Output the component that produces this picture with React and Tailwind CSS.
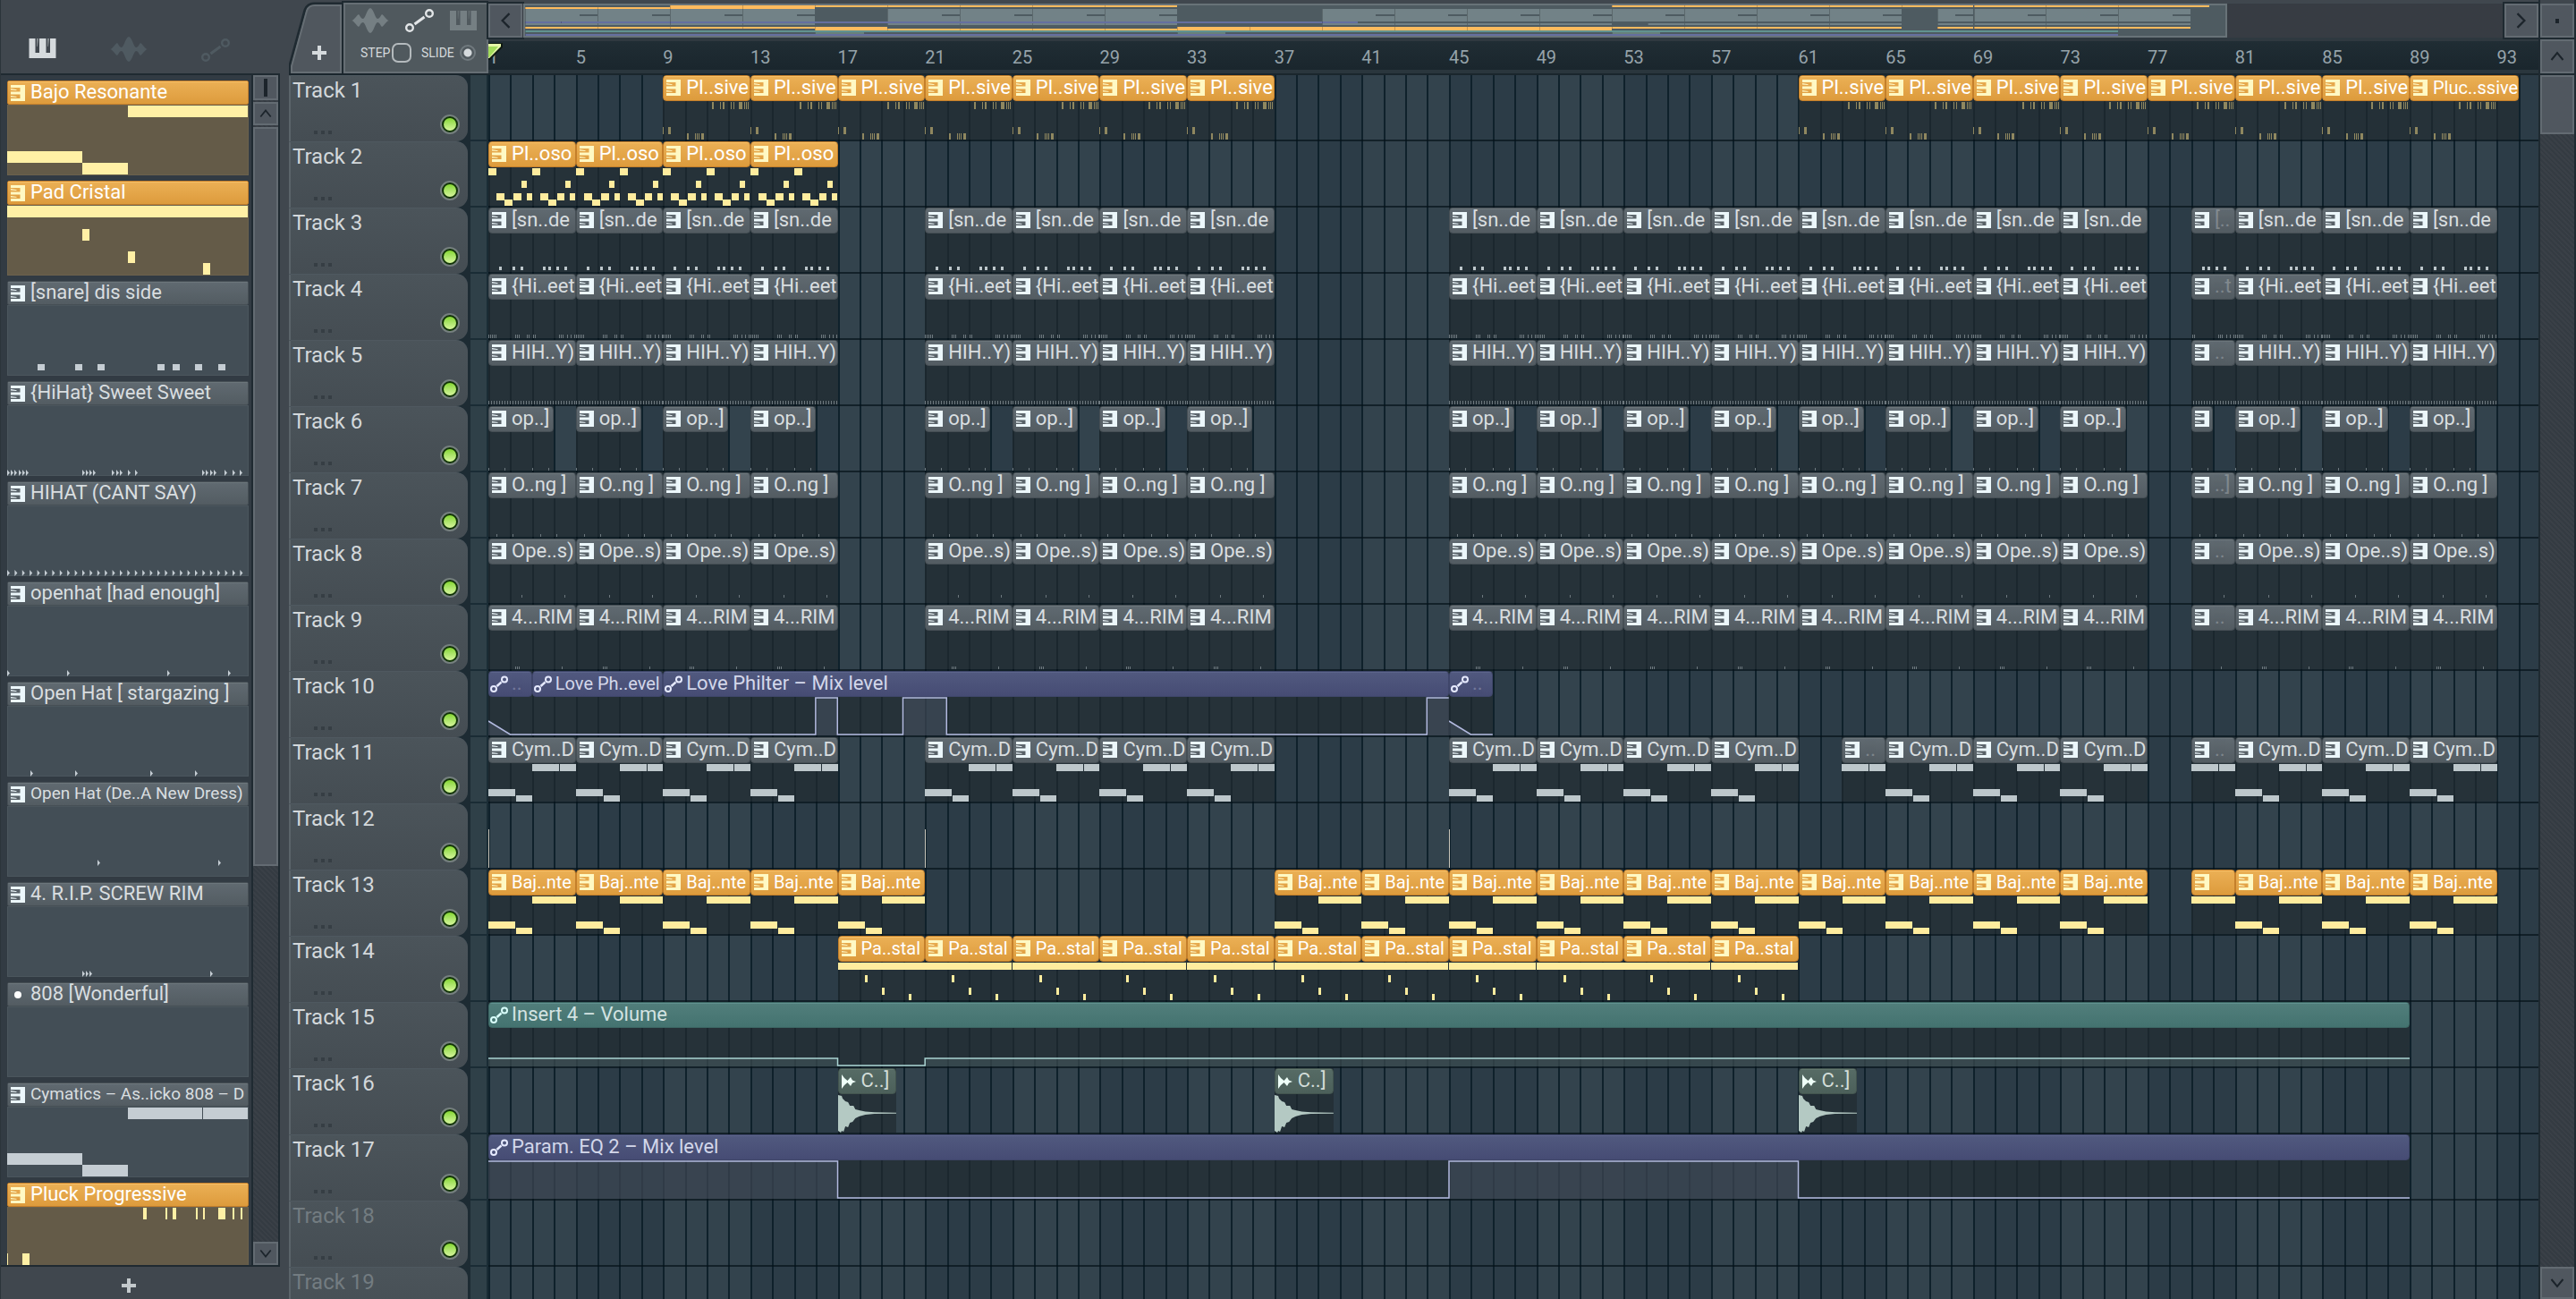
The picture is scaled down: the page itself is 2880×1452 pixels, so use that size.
import React from "react";

const BARS = 93.9;
const BAR_W = 24.41;
const pct = (n) => `${(n / BARS) * 100}%`;

/* ---------- icons ---------- */

function PianoIcon({ className }) {
  return (
    <svg viewBox="0 0 30 22" className={className} fill="currentColor" aria-hidden="true">
      <path d="M0 0H7V16H11.5V0H19V16H23.5V0H30V22H0Z" />
      <path d="M8.6 0H10.4L9.4 9H8.8ZM20.6 0H22.4L21.4 9H20.8Z" opacity="0.55" />
    </svg>
  );
}

function PatternIcon({ className }) {
  return (
    <svg viewBox="0 0 16 18" className={className} fill="currentColor" aria-hidden="true">
      <path d="M0 0H16V18H0V15H10.5V10.6H0V7.4H10.5V3H0Z" />
      <path d="M0 4L7 5.2L6 6L0 5.4ZM0 12L7 13L6 13.8L0 13.6Z" />
    </svg>
  );
}

function WaveIcon({ className }) {
  return (
    <svg viewBox="0 0 42 28" className={className} fill="currentColor" aria-hidden="true">
      <path d="M0 14C3 13.5 5 9 8 7C10 9 10.5 12 13 12C16 11 17 1 21 0C25 1 26 11 29 12C31.5 12 32 9 34 7C37 9 39 13.5 42 14C39 14.5 37 19 34 21C32 19 31.5 16 29 16C26 17 25 27 21 28C17 27 16 17 13 16C10.5 16 10 19 8 21C5 19 3 14.5 0 14Z" />
    </svg>
  );
}

function LinkIcon({ className }) {
  return (
    <svg viewBox="0 0 32 26" className={className} fill="none" stroke="currentColor" aria-hidden="true">
      <circle cx="5" cy="21" r="3.8" strokeWidth="2.4" />
      <circle cx="27" cy="5" r="3.8" strokeWidth="2.4" />
      <path d="M10.5 17L21.5 9" strokeWidth="3" />
    </svg>
  );
}

function SmallLinkIcon({ className }) {
  return (
    <svg viewBox="0 0 20 19" className={className} fill="none" stroke="currentColor" aria-hidden="true">
      <circle cx="4" cy="15" r="3" strokeWidth="2" />
      <circle cx="16" cy="4.5" r="3" strokeWidth="2" />
      <path d="M7.5 12L12.5 7.5" strokeWidth="2.4" />
    </svg>
  );
}

function SampleIcon({ className }) {
  return (
    <svg viewBox="0 0 16 16" className={className} fill="currentColor" aria-hidden="true">
      <path d="M0 0L3 4L6.5 7L10 3L12 6.5L16 8L12 9.5L10 13L6.5 9L3 12L0 16Z" />
    </svg>
  );
}

function PlusIcon({ className }) {
  return (
    <svg viewBox="0 0 16 16" className={className} fill="currentColor" aria-hidden="true">
      <path d="M6 0H10V6H16V10H10V16H6V10H0V6H6Z" />
    </svg>
  );
}

function Chevron({ d, className }) {
  return (
    <svg viewBox="0 0 16 16" className={className} fill="none" stroke="currentColor" strokeWidth="2" aria-hidden="true">
      <path d={d} />
    </svg>
  );
}
const UP = "M1.5 12L8 4L14.5 12";
const DOWN = "M1.5 4L8 12L14.5 4";
const LEFT = "M12 1L5 8L12 15";
const RIGHT = "M4 1L11 8L4 15";

/* ---------- note patterns: [x, y, w, h] ---------- */

const ticks = (xs, y, h = 3) => xs.map((x) => [x, y, 1, h]);
const range = (from, to, step) => {
  const out = [];
  for (let n = from; n < to; n += step) out.push(n);
  return out;
};

const PATTERNS = {
  pluck: [
    [55, 1, 2, 8], [64, 1, 1, 8], [67, 1, 2, 8], [76, 1, 1, 8], [79, 1, 1, 8], [85, 1, 4, 8], [91, 1, 1, 8], [93, 1, 1, 8], [95, 1, 1, 8],
    [0, 29, 1, 8], [6, 29, 3, 8], [27, 36, 2, 7], [36, 36, 1, 7], [38, 36, 1, 7], [40, 36, 1, 7], [43, 36, 3, 7],
  ],
  arp: [
    [0, 1, 9, 8], [49, 1, 9, 8], [37, 15, 6, 8], [86, 15, 6, 8],
    [9, 29, 9, 8], [28, 29, 9, 8], [43, 29, 6, 8], [58, 29, 9, 8], [77, 29, 8, 8], [91, 29, 6, 8], [18, 36, 9, 7], [67, 36, 9, 7],
  ],
  snare: [[12, 37, 3, 4], [27, 37, 3, 4], [36, 37, 3, 4], [61, 37, 3, 4], [67, 37, 3, 4], [76, 37, 3, 4], [85, 37, 3, 4]],
  hihat: ticks([0, 2, 4, 6, 8, 30, 32, 34, 43, 45, 50, 52, 79, 81, 83, 88, 92, 96], 39, 4),
  cantsay: ticks(range(0, 97, 3), 39, 4),
  openhat: ticks([0, 18, 49, 67], 40),
  stargaze: ticks([9, 27, 58, 76], 40),
  newdress: ticks([37, 85], 34),
  rim: ticks([30, 32, 34, 82], 40),
  sub: [[49, 1, 30, 8], [80, 1, 18, 8], [0, 29, 30, 8], [31, 36, 18, 7]],
  bajo: [[49, 1, 49, 8], [0, 29, 30, 8], [31, 36, 18, 7]],
  pad: [[0, 1, 97, 8], [30, 15, 3, 8], [49, 29, 3, 8], [79, 36, 3, 7]],
};

const run = (from, to) => range(from, to, 4);
const MAIN = [...run(1, 17), ...run(21, 37), ...run(45, 77)];
const TAIL = [81, 85, 89];

function repeat(label, starts, extra = {}) {
  return starts.map((at) => ({ at, len: 4, label, ...extra }));
}
function drums(label, half) {
  return [...repeat(label, MAIN), { at: 79, len: 2, label: half, dim: true, offset: 2 }, ...repeat(label, TAIL)];
}

const TRACKS = [
  { name: "Track 1", tone: "orange", pattern: "pluck", faint: true, clips: [...repeat("Pl..sive", [...run(9, 37), ...run(61, 89)]), { at: 89, len: 5, label: "Pluc..ssive", small: true }] },
  { name: "Track 2", tone: "orange", pattern: "arp", clips: repeat("Pl..oso", run(1, 17)) },
  { name: "Track 3", tone: "gray", pattern: "snare", clips: drums("[sn..de", "[..") },
  { name: "Track 4", tone: "gray", pattern: "hihat", faint: true, clips: drums("{Hi..eet", "..t") },
  { name: "Track 5", tone: "gray", pattern: "cantsay", faint: true, clips: drums("HIH..Y)", "..") },
  {
    name: "Track 6", tone: "gray", pattern: "openhat", faint: true,
    clips: [...repeat("op..]", MAIN, { len: 3 }), { at: 79, len: 1, label: "", offset: 2 }, ...repeat("op..]", TAIL, { len: 3 })],
  },
  { name: "Track 7", tone: "gray", pattern: "stargaze", faint: true, clips: drums("O..ng ]", "..]") },
  { name: "Track 8", tone: "gray", pattern: "newdress", faint: true, clips: drums("Ope..s)", "..") },
  { name: "Track 9", tone: "gray", pattern: "rim", faint: true, clips: drums("4...RIM", "..") },
  {
    name: "Track 10", tone: "violet",
    clips: [
      { at: 1, len: 2, label: "..", dim: true, curve: [[0, 27], [1, 42], [2, 42]] },
      { at: 3, len: 6, label: "Love Ph..evel", small: true, curve: [[0, 42], [6, 42]] },
      { at: 9, len: 36, label: "Love Philter – Mix level", curve: [[0, 42], [7, 42], [7, 1], [8, 1], [8, 42], [11, 42], [11, 1], [13, 1], [13, 42], [35, 42], [35, 1], [36, 1]] },
      { at: 45, len: 2, label: "..", dim: true, curve: [[0, 27], [1, 42], [2, 42]] },
    ],
  },
  {
    name: "Track 11", tone: "gray", pattern: "sub",
    clips: [
      ...repeat("Cym..D", [...run(1, 17), ...run(21, 37), ...run(45, 61)]),
      { at: 63, len: 2, label: "..", dim: true, offset: 2 },
      ...repeat("Cym..D", run(65, 77)),
      { at: 79, len: 2, label: "..", dim: true, offset: 2 },
      ...repeat("Cym..D", TAIL),
    ],
  },
  { name: "Track 12", tone: "gray", clips: [], marks: [1, 21, 45] },
  {
    name: "Track 13", tone: "orange", pattern: "bajo",
    clips: [...repeat("Baj..nte", [...run(1, 21), ...run(37, 77)], { small: true }), { at: 79, len: 2, label: "", offset: 2 }, ...repeat("Baj..nte", TAIL, { small: true })],
  },
  { name: "Track 14", tone: "orange", pattern: "pad", clips: repeat("Pa..stal", run(17, 61), { small: true }) },
  { name: "Track 15", tone: "teal", clips: [{ at: 1, len: 88, label: "Insert 4 – Volume", curve: [[0, 34], [16, 34], [16, 42], [20, 42], [20, 34], [88, 34]] }] },
  { name: "Track 16", tone: "sage", clips: repeat("C..]", [17, 37, 61], { len: 2.7 }) },
  { name: "Track 17", tone: "violet", clips: [{ at: 1, len: 88, label: "Param. EQ 2 – Mix level", curve: [[0, 1], [16, 1], [16, 42], [44, 42], [44, 1], [60, 1], [60, 42], [88, 42]] }] },
  { name: "Track 18", tone: "gray", clips: [], off: true },
  { name: "Track 19", tone: "gray", clips: [], off: true },
];

const TONES = {
  orange: { head: "bg-linear-to-b from-[#ebb055] to-[#dd9b3c] border-[#c47f2a] text-white", icon: "text-[#fff9c4]", inner: "border-t-[#f5bf67]", notes: "text-[#ffec9e]", faint: "text-[#8f875f]", map: "bg-[#ffbb5e]" },
  gray: { head: "bg-linear-to-b from-[#606a71] to-[#535c62] border-[#464f55] text-[#d9dee0]", icon: "text-[#ecf7fb]", inner: "border-t-[#6c767b]", notes: "text-[#bdc7cb]", faint: "text-[#6d787e]", map: "bg-[#728287]" },
  violet: { head: "bg-linear-to-b from-[#51597f] to-[#464c74] border-[#3f466a] text-[#d3d7ea]", icon: "text-[#e6eaff]", inner: "border-t-[#5d658c]", notes: "text-[#b3bae0]", faint: "text-[#b3bae0]", map: "bg-[#656f9f]" },
  teal: { head: "bg-linear-to-b from-[#517e7b] to-[#447370] border-[#3c6663] text-[#d3e3e2]", icon: "text-[#d9fffb]", inner: "border-t-[#619290]", notes: "text-[#a9d3d2]", faint: "text-[#a9d3d2]", map: "bg-[#619290]" },
  sage: { head: "bg-linear-to-b from-[#566b65] to-[#4c605a] border-[#43554f] text-[#d3ddd9]", icon: "text-[#eefff8]", inner: "border-t-[#64786f]", notes: "text-[#b4c9c3]", faint: "text-[#b4c9c3]", map: "bg-[#67817b]" },
};

/* ---------- clips ---------- */

function Notes({ clip, notes }) {
  return (
    <svg viewBox={`${(clip.offset || 0) * BAR_W} 0 ${clip.len * BAR_W} 43`} preserveAspectRatio="none" className="block h-full w-full" fill="currentColor" shapeRendering="crispEdges">
      {notes.map(([x, y, w, h], i) => (
        <rect key={i} x={x} y={y} width={w} height={h} />
      ))}
    </svg>
  );
}

function Curve({ clip }) {
  const pts = clip.curve.map(([x, y]) => `${x * BAR_W},${y}`).join(" ");
  return (
    <svg viewBox={`0 0 ${clip.len * BAR_W} 43`} preserveAspectRatio="none" className="block h-full w-full">
      <polygon points={`0,43 ${pts} ${clip.len * BAR_W},43`} fill="currentColor" opacity="0.14" />
      <polyline points={pts} fill="none" stroke="currentColor" strokeWidth="1.5" vectorEffect="non-scaling-stroke" />
    </svg>
  );
}

function Sample() {
  return (
    <svg viewBox="0 0 65 43" preserveAspectRatio="none" className="block h-full w-full" fill="currentColor">
      <path d="M0 1L4 2L5 5L8 8L11 9L13 13L17 13L19 17L23 18L30 19.5L40 20.3L65 20.7V21.7L40 22L30 23L23 25L19 27L16 31L13 32L11 37L8 36L6 42L4 41L3 43L0 41Z" />
    </svg>
  );
}

function Clip({ clip, track }) {
  const tone = TONES[track.tone];
  const auto = Boolean(clip.curve);
  const sample = track.tone === "sage";
  return (
    <div className="absolute inset-y-0 overflow-hidden bg-[#212b31]/70" style={{ left: pct(clip.at - 1), width: pct(clip.len) }}>
      <div className={`flex h-[29px] items-start overflow-hidden rounded-[4px] border ${tone.head}`}>
        <div className={`flex h-full w-full items-start border-t ${tone.inner} ${auto ? "pl-px" : "pl-[3px]"}`}>
          {auto ? (
            <SmallLinkIcon className={`mt-[3px] h-[19px] w-[20px] shrink-0 ${tone.icon}`} />
          ) : sample ? (
            <SampleIcon className={`mt-[5px] h-[16px] w-[16px] shrink-0 ${tone.icon}`} />
          ) : (
            <PatternIcon className={`mt-[3px] h-[18px] w-[16px] shrink-0 ${tone.icon}`} />
          )}
          {clip.label && (
            <span className={`whitespace-nowrap leading-[24px] ${clip.small ? "text-[20px]" : "text-[22px]"} ${auto ? "ml-[4px]" : "ml-[6px]"} ${clip.dim ? "opacity-30" : ""}`}>{clip.label}</span>
          )}
        </div>
      </div>
      <div className={`h-[43px] ${track.faint ? tone.faint : tone.notes}`}>
        {auto ? <Curve clip={clip} /> : sample ? <Sample /> : <Notes clip={clip} notes={PATTERNS[track.pattern]} />}
      </div>
    </div>
  );
}

function Lane({ track }) {
  return (
    <div className="relative h-[74px] shrink-0 border-b-2 border-[#06131a]/70">
      {track.clips.map((clip) => (
        <Clip key={clip.at} clip={clip} track={track} />
      ))}
      {(track.marks || []).map((at) => (
        <div key={at} className="absolute bottom-0 h-[43px] w-px bg-[#c9c4b8]" style={{ left: pct(at - 1) }} />
      ))}
    </div>
  );
}

function Grid() {
  return (
    <div className="absolute inset-0 flex overflow-hidden">
      {range(0, 94, 1).map((i) => (
        <div key={i} className={`shrink-0 border-l-2 border-[#0f212b] ${i % 8 < 4 ? "bg-[#33434d]" : "bg-[#2c3c47]"}`} style={{ width: pct(1) }} />
      ))}
    </div>
  );
}

/* ---------- picker panel ---------- */

const darts = (xs, y = 72) => xs.map((x) => [x, y, 3, 7]);
const PICKER = [
  { name: "Bajo Resonante", tone: "orange", notes: [[135, 1, 134, 13], [0, 52, 84, 13], [84, 65, 51, 13]] },
  { name: "Pad Cristal", tone: "orange", notes: [[0, 1, 269, 13], [84, 27, 8, 13], [135, 52, 8, 13], [219, 65, 8, 13]] },
  { name: "[snare] dis side", notes: [34, 76, 101, 168, 185, 210, 236].map((x) => [x, 66, 8, 7]) },
  { name: "{HiHat} Sweet Sweet", dart: true, notes: darts([0, 4, 8, 13, 17, 21, 84, 88, 92, 96, 117, 122, 126, 135, 143, 218, 222, 227, 231, 243, 252, 260]) },
  { name: "HIHAT (CANT SAY)", dart: true, notes: darts(range(0, 263, 8.4)) },
  { name: "openhat [had enough]", dart: true, notes: darts([0, 67, 179, 247]) },
  { name: "Open Hat [ stargazing ]", dart: true, notes: darts([26, 76, 160, 210]) },
  { name: "Open Hat (De..A New Dress)", dart: true, tight: true, notes: darts([101, 236], 60) },
  { name: "4. R.I.P. SCREW RIM", dart: true, notes: darts([84, 88, 92, 227]) },
  { name: "808 [Wonderful]", dot: true, notes: [] },
  { name: "Cymatics – As..icko 808 – D", tight: true, notes: [[135, 1, 83, 13], [219, 1, 50, 13], [0, 52, 84, 13], [84, 65, 51, 13]] },
  { name: "Pluck Progressive", tone: "orange", notes: [[152, 1, 4, 13], [177, 1, 2, 13], [185, 1, 4, 13], [211, 1, 2, 13], [219, 1, 2, 13], [236, 1, 8, 13], [252, 1, 2, 13], [261, 1, 2, 13], [0, 52, 1, 13], [17, 52, 8, 13]] },
];

function PickerItem({ item }) {
  const tone = TONES[item.tone || "gray"];
  const orange = item.tone === "orange";
  return (
    <button type="button" className="mb-[6px] block h-[106px] w-full shrink-0 text-left">
      <span className={`flex h-[27px] w-full items-start overflow-hidden rounded-[2px] border ${tone.head}`}>
        <span className={`flex h-full w-full items-start border-t pl-[3px] ${tone.inner}`}>
          {item.dot ? (
            <span className="mt-[8px] mr-[4px] ml-[4px] h-[8px] w-[8px] shrink-0 rounded-full bg-white" />
          ) : (
            <PatternIcon className={`mt-[3px] h-[18px] w-[16px] shrink-0 ${tone.icon}`} />
          )}
          <span className={`ml-[6px] whitespace-nowrap leading-[22px] ${item.tight ? "text-[19px]" : "text-[22px]"}`}>{item.name}</span>
        </span>
      </span>
      <span className={`block h-[79px] w-full border ${orange ? "border-[#6c624d] bg-[#645b48] text-[#fff0a5]" : "border-[#4b565d] bg-[#434e56] text-[#c5cdd3]"}`}>
        <svg viewBox="0 0 270 79" preserveAspectRatio="none" className="-m-px block h-[79px] w-[270px]" fill="currentColor">
          {item.notes.map(([x, y, w, h], i) =>
            item.dart ? <path key={i} d={`M${x} ${y}L${x + w} ${y + h / 2}L${x} ${y + h}Z`} /> : <rect key={i} x={x} y={y} width={w} height={h} />
          )}
        </svg>
      </span>
    </button>
  );
}

const BTN = "flex shrink-0 items-center justify-center border-2 border-[#636b72] bg-[#50575f] text-[#1c242b]";
const HATCH = "bg-[repeating-linear-gradient(45deg,#343b42_0px,#343b42_2px,#3a4047_2px,#3a4047_4px)]";

function Sidebar() {
  return (
    <aside className="flex w-[323px] shrink-0 flex-col border-l border-[#2b343a] bg-[#40474e]">
      <div className="flex h-[82px] w-[312px] items-end gap-[60px] pb-[13px] pl-[31px]">
        <button type="button" aria-label="Patterns" className="mb-[4px] text-[#d5dadd]"><PianoIcon className="h-[22px] w-[31px]" /></button>
        <button type="button" aria-label="Audio clips" className="text-[#4f5a61]"><WaveIcon className="h-[28px] w-[42px]" /></button>
        <button type="button" aria-label="Automation clips" className="text-[#4f5a61]"><LinkIcon className="h-[26px] w-[32px]" /></button>
      </div>
      <div className="flex min-h-0 w-[312px] flex-1 border-y-2 border-r-2 border-[#1f2a31] bg-[#323b43]">
        <div className="flex flex-1 flex-col overflow-hidden pt-[6px] pr-[3px] pl-[7px]">
          {PICKER.map((item) => (
            <PickerItem key={item.name} item={item} />
          ))}
        </div>
        <div className={`flex w-[30px] flex-col gap-[2px] border-l-2 border-[#1f2a31] ${HATCH}`}>
          <button type="button" aria-label="Panel width" className={`${BTN} h-[28px]`}><span className="h-[20px] w-[4px] bg-[#1c242b]" /></button>
          <button type="button" aria-label="Scroll up" className={`${BTN} h-[26px]`}><Chevron d={UP} className="h-[14px] w-[14px]" /></button>
          <div className="basis-[826px] border-2 border-[#636b72] bg-[#50575f]" />
          <div className="flex-1" />
          <button type="button" aria-label="Scroll down" className={`${BTN} h-[26px]`}><Chevron d={DOWN} className="h-[14px] w-[14px]" /></button>
        </div>
      </div>
      <div className="flex h-[36px] w-[286px] items-center justify-center pt-[6px]">
        <button type="button" aria-label="Add pattern" className="text-[#c3c9cc]"><PlusIcon className="h-[16px] w-[16px]" /></button>
      </div>
    </aside>
  );
}

/* ---------- top bar ---------- */

function Tools() {
  return (
    <div className="flex w-[223px] shrink-0 items-end">
      <button type="button" aria-label="Add track" className="relative h-[80px] w-[61px] text-[#d5dadd]">
        <svg viewBox="0 0 61 80" className="absolute inset-0 h-full w-full" aria-hidden="true">
          <path d="M1 80V71L18 9Q21 2 28 2H60V80Z" fill="#50575e" stroke="#1f2a31" strokeWidth="3" />
          <path d="M3 79V72L20 10Q22 4 29 4H58V79Z" fill="none" stroke="#666e74" strokeWidth="2" />
        </svg>
        <PlusIcon className="absolute top-[49px] left-[26px] h-[16px] w-[16px]" />
      </button>
      <div className="flex h-[79px] flex-1 flex-col border-2 border-[#666e74] bg-[#50595e] outline-2 outline-[#1f2a31]">
        <div className="flex items-center gap-[18px] pt-[4px] pl-[7px]">
          <button type="button" aria-label="Audio" className="text-[#757f83]"><WaveIcon className="h-[28px] w-[42px]" /></button>
          <button type="button" aria-label="Automation" className="text-[#e3e6e8]"><LinkIcon className="h-[26px] w-[32px]" /></button>
          <button type="button" aria-label="Pattern" className="text-[#757f83]"><PianoIcon className="h-[22px] w-[30px]" /></button>
        </div>
        <div className="flex flex-1 items-center pl-[17px] text-[14px] leading-[20px] text-[#d5dadd]">
          <label htmlFor="step" className="w-[35px]">STEP</label>
          <input id="step" type="checkbox" className="h-[22px] w-[22px] appearance-none rounded-[7px] border-2 border-[#b4babd]" />
          <label htmlFor="slide" className="ml-[11px] w-[43px]">SLIDE</label>
          <input id="slide" type="radio" defaultChecked className="h-[18px] w-[18px] appearance-none rounded-full border-2 border-[#70797e] bg-[radial-gradient(circle,#d5dadd_0px,#d5dadd_4px,transparent_5px)]" />
        </div>
      </div>
    </div>
  );
}

function Overview() {
  return (
    <div className="flex h-[38px] flex-1">
      <button type="button" aria-label="Scroll left" className={`${BTN} w-[38px] outline-2 outline-[#1f2a31]`}><Chevron d={LEFT} className="h-[18px] w-[18px]" /></button>
      <div className="flex flex-1 bg-[#373c43] pl-px">
        <div className="basis-[86%] border-2 border-[#687378] bg-[#4e5b61]">
          {TRACKS.slice(0, 17).map((track) => (
            <div key={track.name} className="relative h-[2px] overflow-hidden">
              {track.clips.map((clip) => (
                <div key={clip.at} className={`absolute inset-y-0 border-l border-black/20 ${TONES[track.tone].map}`} style={{ left: pct(clip.at - 1), width: pct(clip.len) }} />
              ))}
            </div>
          ))}
        </div>
      </div>
      <button type="button" aria-label="Scroll right" className={`${BTN} w-[38px] outline-2 outline-[#1f2a31]`}><Chevron d={RIGHT} className="h-[18px] w-[18px]" /></button>
    </div>
  );
}

function Ruler() {
  return (
    <div className="relative mt-[4px] h-[36px] overflow-hidden border-b-4 border-[#2a363d] bg-linear-to-b from-[#202d34] to-[#1a262d] text-[20px] leading-[36px] text-[#96a3aa]">
      {range(1, 94, 4).map((n) => (
        <span key={n} className="absolute top-0" style={{ left: pct(n - 1) }}>{n}</span>
      ))}
      <svg viewBox="0 0 17 20" className="absolute top-[2px] left-0 h-[20px] w-[17px]" aria-hidden="true">
        <path d="M0 0H16V5L2 19H0Z" fill="#0f1a12" />
        <path d="M0 1H14V4L1 17H0Z" fill="#e6f7a8" />
        <path d="M0 4H11L1 16H0Z" fill="#a3dc5c" />
      </svg>
    </div>
  );
}

/* ---------- track headers ---------- */

function TrackHeader({ track, last }) {
  return (
    <div className="flex h-[74px] shrink-0">
      <div className="w-[200px] rounded-r-[13px] border-t border-l-2 border-t-[#4f5960] border-l-[#5b646a] bg-linear-to-b from-[#4b545a] to-[#454d53] pl-[2px]">
        <span className={`block text-[24px] leading-[32px] ${track.off ? "text-[#737c81]" : "text-[#d3d8db]"}`}>{track.name}</span>
        {!last && (
          <div className="flex items-center pt-[11px] pr-[9px] pl-[24px]">
            <button type="button" aria-label={`${track.name} options`} className="flex flex-1 gap-[4px] pt-[18px]">
              <span className="h-[4px] w-[4px] bg-[#363e44]" />
              <span className="h-[4px] w-[4px] bg-[#363e44]" />
              <span className="h-[4px] w-[4px] bg-[#363e44]" />
            </button>
            <button type="button" aria-label={`Mute ${track.name}`} className="h-[22px] w-[22px] rounded-full border-2 border-[#76807f] bg-[#123408] p-[2px]">
              <span className="block h-full w-full rounded-full bg-linear-to-b from-[#84d62c] to-[#d5f59a]" />
            </button>
          </div>
        )}
      </div>
      <div className="ml-[3px] flex-1 border-r-2 border-b-2 border-r-[#1a2c35] border-b-[#1a2c35] bg-[#2f4048]" />
    </div>
  );
}

function VerticalScroll() {
  return (
    <div className={`flex w-[42px] shrink-0 flex-col border-x-2 border-[#1f2a31] ${HATCH}`}>
      <div className="h-[4px] bg-[#40474e]" />
      <button type="button" aria-label="Detach" className={`${BTN} h-[38px]`}><span className="h-[5px] w-[4px] bg-[#1c242b]" /></button>
      <div className="h-[2px] bg-[#1f2a31]" />
      <button type="button" aria-label="Scroll tracks up" className={`${BTN} h-[38px]`}><Chevron d={UP} className="h-[16px] w-[18px]" /></button>
      <div className="h-[2px] bg-[#1f2a31]" />
      <div className="h-[66px] border-2 border-[#636b72] bg-[#50575f]" />
      <div className="flex-1" />
      <button type="button" aria-label="Scroll tracks down" className={`${BTN} h-[36px]`}><Chevron d={DOWN} className="h-[16px] w-[18px]" /></button>
    </div>
  );
}

export default function App() {
  return (
    <div className="flex h-screen overflow-hidden bg-[#40474e] font-['Roboto',sans-serif]">
      <Sidebar />
      <main className="flex min-w-0 flex-1">
        <div className="flex min-w-0 flex-1 flex-col">
          <div className="flex h-[82px] shrink-0">
            <Tools />
            <div className="flex min-w-0 flex-1 flex-col bg-[#2f3940]">
              <div className="flex border-t-4 border-[#40474e]"><Overview /></div>
              <Ruler />
            </div>
          </div>
          <div className="flex min-h-0 flex-1 overflow-hidden border-t-2 border-[#1a262d]">
            <div className="flex w-[223px] shrink-0 flex-col bg-[#1d2b33]">
              {TRACKS.map((track, i) => (
                <TrackHeader key={track.name} track={track} last={i === TRACKS.length - 1} />
              ))}
            </div>
            <div className="relative min-w-0 flex-1 overflow-hidden">
              <Grid />
              <div className="relative flex flex-col">
                {TRACKS.map((track) => (
                  <Lane key={track.name} track={track} />
                ))}
              </div>
            </div>
          </div>
        </div>
        <VerticalScroll />
      </main>
    </div>
  );
}
